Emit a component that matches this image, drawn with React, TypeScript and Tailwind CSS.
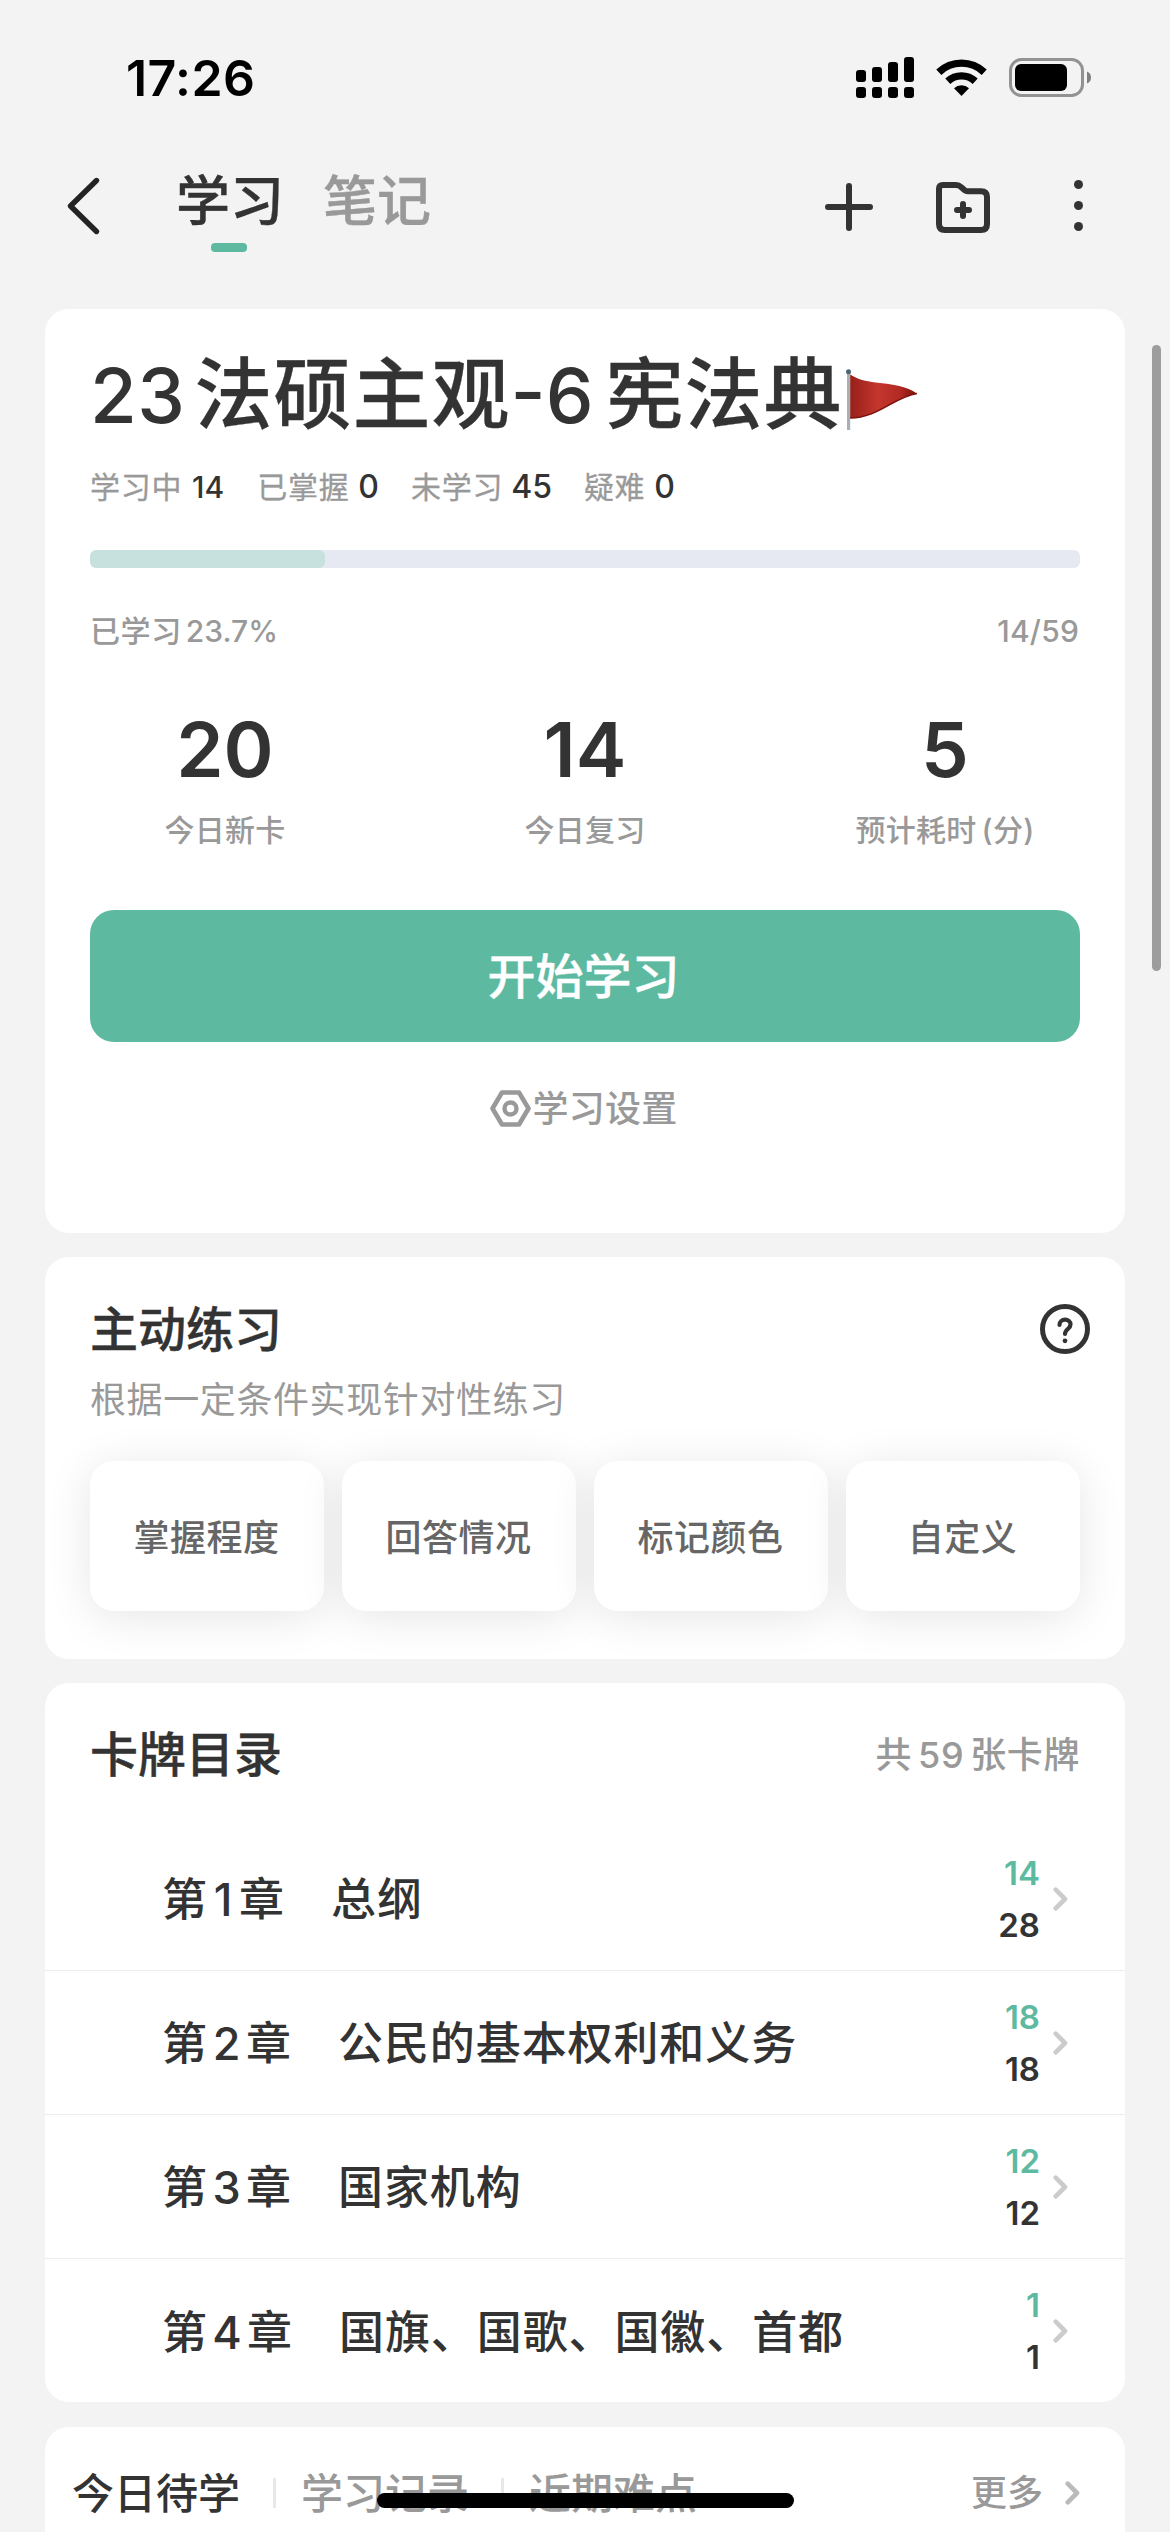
import React from "react";

function StatusBar() {
  return (
    <div className="flex h-[141px] items-start pl-[126px] pr-[79px]">
      <div className="mt-[53px] text-[50px] font-semibold leading-[50px] tracking-[0.4px] text-black">17:26</div>
      <div className="ml-auto mt-[56px] flex items-start">
        <svg className="h-[42px] w-[58px]" viewBox="0 0 58 42" fill="#000">
          <rect x="0" y="14" width="10" height="12" rx="3" />
          <rect x="16" y="11" width="10" height="15" rx="3" />
          <rect x="32" y="6" width="10" height="20" rx="3" />
          <rect x="48" y="1" width="10" height="25" rx="3" />
          <rect x="0" y="31" width="10" height="11" rx="3" />
          <rect x="16" y="31" width="10" height="11" rx="3" />
          <rect x="32" y="31" width="10" height="11" rx="3" />
          <rect x="48" y="31" width="10" height="11" rx="3" />
        </svg>
        <svg className="ml-[22px] mt-[3px] h-[38px] w-[51px]" viewBox="0 0 51 38">
          <path d="M2.8 13.2 A33 33 0 0 1 48.2 13.2" fill="none" stroke="#000" strokeWidth="7.4" />
          <path d="M11.8 22.3 A20 20 0 0 1 39.2 22.3" fill="none" stroke="#000" strokeWidth="7.4" />
          <path d="M18 29.3 A11 11 0 0 1 33 29.3 L25.5 37 Z" fill="#000" />
        </svg>
        <svg className="ml-[22px] mt-[2px] h-[39px] w-[82px]" viewBox="0 0 82 39">
          <rect x="1.5" y="1.5" width="72" height="36" rx="11" fill="none" stroke="#929292" strokeWidth="3" />
          <rect x="6" y="6" width="52" height="27" rx="6" fill="#000" />
          <path d="M78 13.5 Q82 15 82 19.5 Q82 24 78 25.5 Z" fill="#808080" />
        </svg>
      </div>
    </div>
  );
}

function NavBar() {
  return (
    <div className="flex h-[168px] items-start">
      <svg className="ml-[66px] mt-[35px] h-[60px] w-[36px]" viewBox="0 0 36 60" fill="none" stroke="#232323" strokeWidth="5.4" strokeLinecap="round" strokeLinejoin="round">
        <path d="M30.5 4.5 L4.5 30 L30.5 55.5" />
      </svg>
      <div className="ml-[73px] mt-[34px] flex w-[108px] flex-col items-center">
        <div className="whitespace-nowrap pl-[2px] text-[54px] font-medium leading-[54px] [-webkit-text-stroke:0.4px]">学习</div>
        <div className="mt-[14px] h-[9px] w-[36px] rounded-[4px] bg-[#5dbaa1]" />
      </div>
      <div className="ml-[40px] mt-[34px] whitespace-nowrap text-[54px] font-medium leading-[54px] text-[#999] [-webkit-text-stroke:0.4px]">笔记</div>
      <svg className="ml-auto mt-[42px] h-[48px] w-[48px]" viewBox="0 0 48 48" stroke="#333" strokeWidth="6" strokeLinecap="round">
        <path d="M24 3 V45 M3 24 H45" />
      </svg>
      <svg className="ml-[63px] mt-[41px] h-[51px] w-[54px]" viewBox="0 0 54 51" fill="none" stroke="#333" strokeWidth="6" strokeLinecap="round" strokeLinejoin="round">
        <path d="M7 3 H20 Q23 3 25 5 L29 8.500 Q30 9.300 31.500 9.300 H45 Q51 9.300 51 15 V42 Q51 48 45 48 H9 Q3 48 3 42 V7 Q3 3 7 3 Z" />
        <path d="M27 22 V34 M21 28 H33" />
      </svg>
      <svg className="ml-[84px] mr-[87px] mt-[39px] h-[52px] w-[9px]" viewBox="0 0 9 52" fill="#333">
        <circle cx="4.500" cy="4.500" r="4.500" />
        <circle cx="4.500" cy="25.500" r="4.500" />
        <circle cx="4.500" cy="46.500" r="4.500" />
      </svg>
    </div>
  );
}

function Flag() {
  return (
    <svg className="ml-[3px] mt-[13px] h-[62px] w-[74px]" viewBox="0 0 74 62">
      <defs>
        <linearGradient id="cloth" x1="0" y1="0" x2="1" y2="0">
          <stop offset="0" stopColor="#96201a" />
          <stop offset="0.42" stopColor="#c4362e" />
          <stop offset="0.75" stopColor="#b22a23" />
          <stop offset="1" stopColor="#7c0f0b" />
        </linearGradient>
      </defs>
      <rect x="1" y="3" width="3.200" height="58" fill="#a9b0b5" />
      <circle cx="2.500" cy="2.700" r="2.500" fill="#4d6475" />
      <path d="M4.200 5.500 C22 18 50 10 71 24.500 C48 28 32 49 4.200 49 Z" fill="url(#cloth)" />
      <path d="M71 24.500 C48 28 32 49 4.200 49" fill="none" stroke="#7c100b" strokeWidth="1.500" />
    </svg>
  );
}

const counts = [
  { label: "学习中", value: "14", size: "text-[30px]", gap: "ml-[10px] mr-[33px]" },
  { label: "已掌握", value: "0", size: "text-[32px]", gap: "ml-[9px] mr-[32px]" },
  { label: "未学习", value: "45", size: "text-[32px]", gap: "ml-[8px] mr-[32px]" },
  { label: "疑难", value: "0", size: "text-[32px]", gap: "ml-[9px]" },
];

const totals = [
  { value: "20", label: "今日新卡" },
  { value: "14", label: "今日复习" },
  { value: "5", label: "预计耗时", unit: "(分)" },
];

function SummaryCard() {
  return (
    <section className="h-[924px] rounded-[24px] bg-white px-[45px] pt-[47px]">
      <h1 className="flex h-[78px] items-start whitespace-nowrap text-[78px] font-medium leading-[78px]">
        <span className="text-[76px] tracking-[0.5px]">23</span>
        <span className="ml-[9px] tracking-[1px] [-webkit-text-stroke:0.3px]">法硕主观</span>
        <span className="text-[76px]">-6</span>
        <span className="ml-[12px] tracking-[1px] [-webkit-text-stroke:0.3px]">宪法典</span>
        <Flag />
      </h1>
      <div className="mt-[35px] flex h-[36px] items-center">
        {counts.map((c) => (
          <React.Fragment key={c.label}>
            <span className="text-[30px] leading-[36px] tracking-[0.7px] text-[#999] [-webkit-text-stroke:0.3px]">{c.label}</span>
            <span className={`${c.size} ${c.gap} font-medium leading-[36px]`}>{c.value}</span>
          </React.Fragment>
        ))}
      </div>
      <div className="mt-[45px] h-[18px] overflow-hidden rounded-[6px] bg-[#e7e9f2]">
        <div className="h-full w-[23.7%] rounded-[6px] bg-[#c7e1df]" />
      </div>
      <div className="mt-[45px] flex h-[36px] items-center text-[30px] font-medium leading-[36px] text-[#999]">
        <span className="tracking-[0.6px]">已学习</span>
        <span className="ml-[4px]">23.7%</span>
        <span className="ml-auto mr-[1px] tracking-[0.2px]">14/59</span>
      </div>
      <div className="-mx-[45px] mt-[61px] grid grid-cols-3">
        {totals.map((t) => (
          <div key={t.label} className="flex flex-col items-center">
            <div className="text-[76px] font-semibold leading-[78px]">{t.value}</div>
            <div className="mt-[24px] flex text-[30px] font-medium leading-[36px] tracking-[0.3px] text-[#999]">
              {t.label}
              {t.unit && <span className="ml-[5px]">{t.unit}</span>}
            </div>
          </div>
        ))}
      </div>
      <button className="mt-[62px] flex h-[132px] w-full items-center justify-center rounded-[24px] bg-[#5dbaa1] pr-[3px] pt-[2px] text-[48px] font-medium leading-[48px] text-white [-webkit-text-stroke:0.4px]">
        开始学习
      </button>
      <div className="mt-[46px] flex h-[40px] items-center justify-center pr-[2px] text-[#999]">
        <svg className="h-[37px] w-[41px]" viewBox="0 0 41 37" fill="none" stroke="#999" strokeLinejoin="round">
          <path d="M12 2.500 H29 L38.500 18.500 L29 34.500 H12 L2.500 18.500 Z" strokeWidth="4.600" />
          <circle cx="20.500" cy="18.500" r="6" strokeWidth="4.400" />
        </svg>
        <span className="ml-[1px] pt-[2px] text-[36px] font-medium leading-[40px] tracking-[0.3px]">学习设置</span>
      </div>
    </section>
  );
}

const modes = ["掌握程度", "回答情况", "标记颜色", "自定义"];

function PracticeCard() {
  return (
    <section className="mt-[24px] h-[402px] overflow-hidden rounded-[24px] bg-white px-[45px] pt-[45px]">
      <div className="flex h-[54px] items-center">
        <h2 className="pt-[2px] text-[48px] font-medium leading-[54px] [-webkit-text-stroke:0.4px]">主动练习</h2>
        <svg className="-mr-[10px] ml-auto h-[50px] w-[50px]" viewBox="0 0 50 50" fill="none" stroke="#333" strokeLinecap="round" strokeLinejoin="round">
          <circle cx="25" cy="25" r="22.500" strokeWidth="5" />
          <path d="M19.500 21 C19.500 14 30.500 14 30.500 20.500 C30.500 25 25 25 25 30" strokeWidth="4.200" />
          <circle cx="25" cy="36.800" r="2.400" fill="#333" stroke="none" />
        </svg>
      </div>
      <p className="mt-[24px] h-[40px] text-[36px] leading-[40px] tracking-[0.6px] text-[#999]">根据一定条件实现针对性练习</p>
      <div className="mt-[41px] grid grid-cols-4 gap-[18px]">
        {modes.map((m) => (
          <div key={m} className="flex h-[150px] items-center justify-center rounded-[24px] bg-white pr-[1px] pt-[3px] text-[36px] font-medium leading-[40px] tracking-[0.5px] text-[#666] shadow-[0_6px_45px_rgba(0,0,0,0.1)]">
            {m}
          </div>
        ))}
      </div>
    </section>
  );
}

function Chevron({ color }: { color: string }) {
  return (
    <svg className="h-[24px] w-[15px]" viewBox="0 0 15 24" fill="none" stroke={color} strokeWidth="4.600" strokeLinecap="round" strokeLinejoin="round">
      <path d="M2.700 2.700 L12 12 L2.700 21.300" />
    </svg>
  );
}

const chapters = [
  { no: "1", title: "总纲", due: "14", total: "28", width: "w-[32px]" },
  { no: "2", title: "公民的基本权利和义务", due: "18", total: "18", width: "w-[39px]" },
  { no: "3", title: "国家机构", due: "12", total: "12", width: "w-[39px]" },
  { no: "4", title: "国旗、国歌、国徽、首都", due: "1", total: "1", width: "w-[40px]" },
];

function CatalogCard() {
  return (
    <section className="mt-[24px] h-[719px] overflow-hidden rounded-[24px] bg-white">
      <div className="flex h-[144px] items-center px-[45px]">
        <h2 className="text-[48px] font-medium leading-[54px] [-webkit-text-stroke:0.4px]">卡牌目录</h2>
        <div className="ml-auto flex items-center text-[36px] font-medium leading-[40px] tracking-[0.6px] text-[#999]">
          <span>共</span>
          <span className="mx-[6px]">59</span>
          <span>张卡牌</span>
        </div>
      </div>
      {chapters.map((c) => (
        <div key={c.no} className="flex h-[144px] items-center border-b border-[#ececec] pl-[117px] pr-[57px] text-[45px] font-medium leading-[54px] last:border-b-0">
          <div className="flex pt-[3px]">
            <span>第</span>
            <span className={`${c.width} text-center`}>{c.no}</span>
            <span>章</span>
            <span className="ml-[47px] tracking-[0.9px]">{c.title}</span>
          </div>
          <div className="ml-auto mr-[13px] text-right text-[33px] font-semibold leading-[52px]">
            <div className="text-[#5dbaa1]">{c.due}</div>
            <div>{c.total}</div>
          </div>
          <Chevron color="#ccc" />
        </div>
      ))}
    </section>
  );
}

function ReviewCard() {
  return (
    <section className="mt-[25px] flex h-[200px] items-start rounded-t-[24px] bg-white pl-[27px] pr-[45px] pt-[42px]">
      <div className="flex h-[48px] flex-1 items-center text-[42px] font-medium leading-[48px]">
        <span className="pt-[1px]">今日待学</span>
        <span className="ml-[33px] h-[30px] w-[3px] bg-[#e8e8e8]" />
        <span className="ml-[25px] pt-[1px] text-[#999]">学习记录</span>
        <span className="ml-[32px] h-[30px] w-[3px] bg-[#e8e8e8]" />
        <span className="ml-[25px] pt-[1px] text-[#999]">近期难点</span>
        <span className="ml-auto mr-[22px] text-[36px] text-[#999]">更多</span>
        <Chevron color="#bbb" />
      </div>
    </section>
  );
}

export default function App() {
  return (
    <div className="relative h-[2532px] w-[1170px] overflow-hidden bg-[#f3f3f3] text-[#333] [font-family:Inter,'Noto_Sans_CJK_SC',sans-serif]">
      <StatusBar />
      <NavBar />
      <main className="mx-[45px]">
        <SummaryCard />
        <PracticeCard />
        <CatalogCard />
        <ReviewCard />
      </main>
      <div className="absolute left-[1152px] top-[345px] h-[626px] w-[9px] rounded-full bg-[#9d9d9d]" />
      <div className="absolute left-[377px] top-[2493px] h-[15px] w-[417px] rounded-full bg-black" />
    </div>
  );
}
